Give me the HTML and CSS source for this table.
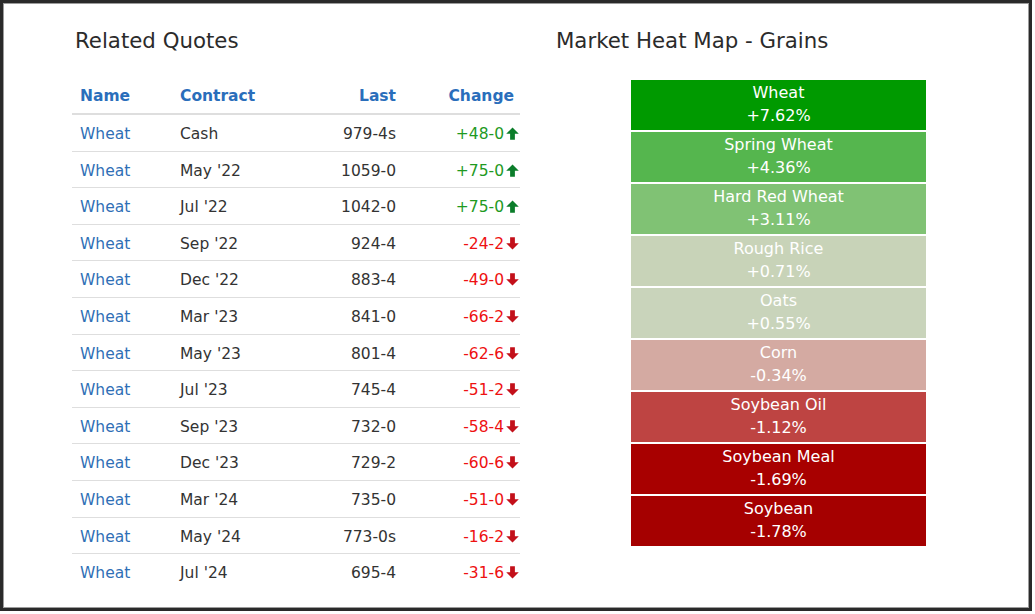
FILE: index.html
```html
<!DOCTYPE html>
<html>
<head>
<meta charset="utf-8">
<link rel="stylesheet" href="styles.css">
</head>
<body>
<div class="frame">
  <div class="cols">
    <section class="quotes">
      <h2 class="title">Related Quotes</h2>
      <table class="qt">
        <colgroup><col class="c-name"><col class="c-contract"><col class="c-last"><col class="c-change"></colgroup>
        <thead>
          <tr><th class="l">Name</th><th class="l">Contract</th><th class="r">Last</th><th class="r ch">Change</th></tr>
        </thead>
        <tbody>
          <tr><td class="name">Wheat</td><td>Cash</td><td class="r">979-4s</td><td class="r up">+48-0<svg class="arr" viewBox="0 0 12 12"><path d="M6 0.5 L11.8 6.2 L8.2 6.2 L8.2 11.8 L3.8 11.8 L3.8 6.2 L0.2 6.2 Z"/></svg></td></tr>
          <tr><td class="name">Wheat</td><td>May '22</td><td class="r">1059-0</td><td class="r up">+75-0<svg class="arr" viewBox="0 0 12 12"><path d="M6 0.5 L11.8 6.2 L8.2 6.2 L8.2 11.8 L3.8 11.8 L3.8 6.2 L0.2 6.2 Z"/></svg></td></tr>
          <tr><td class="name">Wheat</td><td>Jul '22</td><td class="r">1042-0</td><td class="r up">+75-0<svg class="arr" viewBox="0 0 12 12"><path d="M6 0.5 L11.8 6.2 L8.2 6.2 L8.2 11.8 L3.8 11.8 L3.8 6.2 L0.2 6.2 Z"/></svg></td></tr>
          <tr><td class="name">Wheat</td><td>Sep '22</td><td class="r">924-4</td><td class="r dn">-24-2<svg class="arr" viewBox="0 0 12 12"><path d="M6 11.5 L11.8 5.8 L8.2 5.8 L8.2 0.2 L3.8 0.2 L3.8 5.8 L0.2 5.8 Z"/></svg></td></tr>
          <tr><td class="name">Wheat</td><td>Dec '22</td><td class="r">883-4</td><td class="r dn">-49-0<svg class="arr" viewBox="0 0 12 12"><path d="M6 11.5 L11.8 5.8 L8.2 5.8 L8.2 0.2 L3.8 0.2 L3.8 5.8 L0.2 5.8 Z"/></svg></td></tr>
          <tr><td class="name">Wheat</td><td>Mar '23</td><td class="r">841-0</td><td class="r dn">-66-2<svg class="arr" viewBox="0 0 12 12"><path d="M6 11.5 L11.8 5.8 L8.2 5.8 L8.2 0.2 L3.8 0.2 L3.8 5.8 L0.2 5.8 Z"/></svg></td></tr>
          <tr><td class="name">Wheat</td><td>May '23</td><td class="r">801-4</td><td class="r dn">-62-6<svg class="arr" viewBox="0 0 12 12"><path d="M6 11.5 L11.8 5.8 L8.2 5.8 L8.2 0.2 L3.8 0.2 L3.8 5.8 L0.2 5.8 Z"/></svg></td></tr>
          <tr><td class="name">Wheat</td><td>Jul '23</td><td class="r">745-4</td><td class="r dn">-51-2<svg class="arr" viewBox="0 0 12 12"><path d="M6 11.5 L11.8 5.8 L8.2 5.8 L8.2 0.2 L3.8 0.2 L3.8 5.8 L0.2 5.8 Z"/></svg></td></tr>
          <tr><td class="name">Wheat</td><td>Sep '23</td><td class="r">732-0</td><td class="r dn">-58-4<svg class="arr" viewBox="0 0 12 12"><path d="M6 11.5 L11.8 5.8 L8.2 5.8 L8.2 0.2 L3.8 0.2 L3.8 5.8 L0.2 5.8 Z"/></svg></td></tr>
          <tr><td class="name">Wheat</td><td>Dec '23</td><td class="r">729-2</td><td class="r dn">-60-6<svg class="arr" viewBox="0 0 12 12"><path d="M6 11.5 L11.8 5.8 L8.2 5.8 L8.2 0.2 L3.8 0.2 L3.8 5.8 L0.2 5.8 Z"/></svg></td></tr>
          <tr><td class="name">Wheat</td><td>Mar '24</td><td class="r">735-0</td><td class="r dn">-51-0<svg class="arr" viewBox="0 0 12 12"><path d="M6 11.5 L11.8 5.8 L8.2 5.8 L8.2 0.2 L3.8 0.2 L3.8 5.8 L0.2 5.8 Z"/></svg></td></tr>
          <tr><td class="name">Wheat</td><td>May '24</td><td class="r">773-0s</td><td class="r dn">-16-2<svg class="arr" viewBox="0 0 12 12"><path d="M6 11.5 L11.8 5.8 L8.2 5.8 L8.2 0.2 L3.8 0.2 L3.8 5.8 L0.2 5.8 Z"/></svg></td></tr>
          <tr><td class="name">Wheat</td><td>Jul '24</td><td class="r">695-4</td><td class="r dn">-31-6<svg class="arr" viewBox="0 0 12 12"><path d="M6 11.5 L11.8 5.8 L8.2 5.8 L8.2 0.2 L3.8 0.2 L3.8 5.8 L0.2 5.8 Z"/></svg></td></tr>
        </tbody>
      </table>
    </section>
    <section class="heat">
      <h2 class="title">Market Heat Map - Grains</h2>
      <div class="map">
        <div class="cell h1"><div>Wheat</div><div>+7.62%</div></div>
        <div class="cell h2"><div>Spring Wheat</div><div>+4.36%</div></div>
        <div class="cell h3"><div>Hard Red Wheat</div><div>+3.11%</div></div>
        <div class="cell h4"><div>Rough Rice</div><div>+0.71%</div></div>
        <div class="cell h5"><div>Oats</div><div>+0.55%</div></div>
        <div class="cell h6"><div>Corn</div><div>-0.34%</div></div>
        <div class="cell h7"><div>Soybean Oil</div><div>-1.12%</div></div>
        <div class="cell h8"><div>Soybean Meal</div><div>-1.69%</div></div>
        <div class="cell h9"><div>Soybean</div><div>-1.78%</div></div>
      </div>
    </section>
  </div>
</div>
</body>
</html>
```

FILE: styles.css
```css
html, body {
  margin: 0;
  padding: 0;
  background: #fff;
}
body {
  font-family: "DejaVu Sans", "Open Sans", sans-serif;
  color: #333;
}
.frame {
  box-sizing: border-box;
  width: 1032px;
  height: 611px;
  border: 3px solid #2a2a2a;
  box-shadow: inset 0 0 0 1px #9c9c9c;
  padding: 26px 0 0 69px;
}
.cols {
  display: grid;
  grid-template-columns: 448px 448px;
  column-gap: 36px;
}
.title {
  margin: 0;
  font-size: 21.3px;
  line-height: 24px;
  font-weight: normal;
  color: #2b2b2b;
  padding-left: 3px;
}
.heat .title {
  padding-left: 0;
}
.qt {
  margin-top: 25px;
  width: 448px;
  border-collapse: collapse;
  table-layout: fixed;
  font-size: 15.5px;
}
.c-name { width: 100px; }
.c-contract { width: 130px; }
.c-last { width: 102px; }
.c-change { width: 116px; }
.qt th {
  color: #2a6ebb;
  font-weight: bold;
  font-size: 15.5px;
  line-height: 20px;
  padding: 8px 8px 7px 8px;
  border-bottom: 2px solid #dedede;
}
.qt th.ch { padding-right: 6px; }
.qt td {
  line-height: 19.6px;
  padding: 10px 8px 6px;
  border-top: 1px solid #dedede;
  color: #333;
  white-space: nowrap;
}
.l { text-align: left; }
.r { text-align: right; }
.qt td.name { color: #2f6fb6; }
.qt td.up, .qt td.dn { padding-right: 1px; }
.qt td.up { color: #1f9a1f; }
.qt td.dn { color: #ee1111; }
.arr {
  width: 13px;
  height: 13px;
  margin-left: 2px;
  vertical-align: -1px;
}
.up .arr { fill: #0b7d2a; }
.dn .arr { fill: #c3101a; }
.map {
  margin-top: 27px;
  margin-left: 75px;
  width: 295px;
  display: flex;
  flex-direction: column;
  gap: 2px;
}
.cell {
  height: 50px;
  box-sizing: border-box;
  padding-top: 1px;
  text-align: center;
  color: #fff;
  font-size: 16px;
  line-height: 23px;
}
.h1 { background: #009a00; }
.h2 { background: #55b64e; }
.h3 { background: #80c274; }
.h4 { background: #c8d3b8; }
.h5 { background: #c9d4bb; }
.h6 { background: #d4aaa2; }
.h7 { background: #be4442; }
.h8 { background: #a80000; }
.h9 { background: #a50000; }
```
